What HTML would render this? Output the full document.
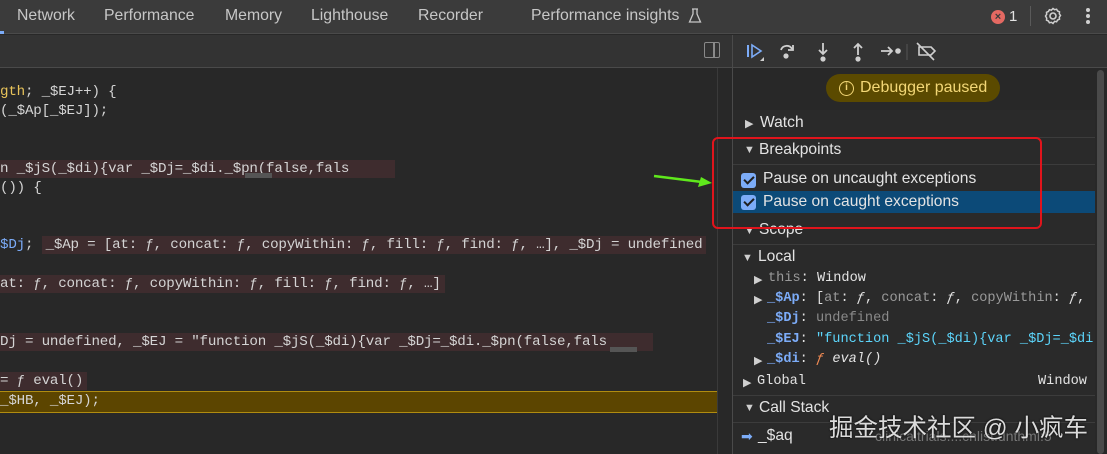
<!DOCTYPE html>
<html><head><meta charset="utf-8"><style>
*{margin:0;padding:0;box-sizing:border-box}
body{width:1107px;height:454px;overflow:hidden;background:#282828;font-family:"Liberation Sans",sans-serif;position:relative;color:#e3e3e3}
.a{position:absolute;white-space:nowrap}
.tab{font-size:15.8px;color:#c7c7c7;top:7px}
.code{font-family:"Liberation Mono",monospace;font-size:14.2px;color:#d4d4d4;letter-spacing:-0.2px}
.iv{background:#3e2c2e;padding:1px 4px}
.sec{font-size:15.6px;color:#e3e3e3}
.tri{font-size:11px;color:#cfcfcf}
.mono{font-family:"Liberation Mono",monospace;font-size:13.6px}
.chk{width:15px;height:15px;background:#7cacf8;border-radius:3px;position:absolute}
.chk:after{content:"";position:absolute;left:4.5px;top:1px;width:4px;height:8px;border:solid #1f1f1f;border-width:0 2px 2px 0;transform:rotate(45deg)}
.hl{border-top:1px solid #3c3c3c}
</style></head><body>
<div class="a" style="left:0;top:0;width:1107px;height:34px;background:#3b3b3b;border-bottom:1px solid #4a4a4a"></div>
<div class="a" style="left:0;top:31px;width:4px;height:3px;background:#7cacf8"></div>
<div class="a tab" style="left:17px">Network</div>
<div class="a tab" style="left:104px">Performance</div>
<div class="a tab" style="left:225px">Memory</div>
<div class="a tab" style="left:311px">Lighthouse</div>
<div class="a tab" style="left:418px">Recorder</div>
<div class="a tab" style="left:531px">Performance insights</div>
<svg class="a" style="left:688px;top:8px" width="14" height="16" viewBox="0 0 14 16"><path d="M4 1h6M5 1v5L1.5 14h11L9 6V1" fill="none" stroke="#c7c7c7" stroke-width="1.3"/></svg>
<div class="a" style="left:991px;top:10px;width:14px;height:14px;border-radius:50%;background:#e46962;color:#3b3b3b;font-size:11px;line-height:14px;text-align:center;font-weight:bold">×</div>
<div class="a" style="left:1009px;top:8px;font-size:15px;color:#e3e3e3">1</div>
<div class="a" style="left:1030px;top:6px;width:1px;height:20px;background:#5a5a5a"></div>
<svg class="a" style="left:1043px;top:6px" width="20" height="20" viewBox="0 0 20 20"><circle cx="10" cy="10" r="3" fill="none" stroke="#d0d0d0" stroke-width="1.6"/><path d="M10 2.5l1.6 1.2 2-.5 1 1.8 1.9.8-.2 2 1.2 1.7-1.2 1.7.2 2-1.9.8-1 1.8-2-.5L10 17.5l-1.6-1.2-2 .5-1-1.8-1.9-.8.2-2L2.5 10l1.2-1.7-.2-2 1.9-.8 1-1.8 2 .5z" fill="none" stroke="#d0d0d0" stroke-width="1.5"/></svg>
<div class="a" style="left:1086px;top:8px;width:4px;height:4px;border-radius:2px;background:#d0d0d0;box-shadow:0 6px 0 #d0d0d0,0 12px 0 #d0d0d0"></div>
<div class="a" style="left:0;top:35px;width:733px;height:33px;background:#333;border-bottom:1px solid #4a4a4a"></div>
<div class="a" style="left:733px;top:35px;width:374px;height:33px;background:#333;border-bottom:1px solid #4a4a4a"></div>
<div class="a" style="left:732px;top:35px;width:1px;height:419px;background:#4a4a4a"></div>
<div class="a" style="left:704px;top:42px;width:16px;height:16px;border:1.5px solid #8a8a8a;border-radius:2px"></div>
<div class="a" style="left:713px;top:42px;width:1.5px;height:16px;background:#8a8a8a"></div>
<svg class="a" style="left:745px;top:40px" width="200" height="24" viewBox="0 0 200 24">
<path d="M3 5v12" stroke="#7cacf8" stroke-width="2"/><path d="M7 5l9 6-9 6z" fill="none" stroke="#7cacf8" stroke-width="1.6"/><path d="M15 21l4-4v4z" fill="#cfcfcf"/>
<path d="M36 10a6 6 0 0 1 11-1" fill="none" stroke="#cfcfcf" stroke-width="1.8"/><path d="M48 5v5h-5" fill="none" stroke="#cfcfcf" stroke-width="1.8"/><circle cx="41" cy="16" r="2.6" fill="#cfcfcf"/>
<path d="M78 3v11M74 10l4 4 4-4" fill="none" stroke="#cfcfcf" stroke-width="1.8"/><circle cx="78" cy="19" r="2.6" fill="#cfcfcf"/>
<path d="M113 15V4M109 8l4-4 4 4" fill="none" stroke="#cfcfcf" stroke-width="1.8"/><circle cx="113" cy="19" r="2.6" fill="#cfcfcf"/>
<path d="M136 11h11M143 7l4 4-4 4" fill="none" stroke="#cfcfcf" stroke-width="1.8"/><circle cx="153" cy="11" r="2.8" fill="#cfcfcf"/>
<path d="M162 4v16" stroke="#555" stroke-width="1"/>
<path d="M186 7l4 4-4 4H174V7z" fill="none" stroke="#cfcfcf" stroke-width="1.6"/><path d="M172 3l17 17" stroke="#cfcfcf" stroke-width="1.6"/>
</svg>
<div class="a code" style="left:0;top:84px"><span style="color:#e8c35a">gth</span>; _$EJ++) {</div>
<div class="a code" style="left:0;top:103px">(_$Ap[_$EJ]);</div>
<div class="a code" style="left:0;top:161px"><span class="iv" style="padding-left:0;padding-right:46px">n _$jS(_$di){var _$Dj=_$di._$pn(false,fals</span></div>
<div class="a" style="left:245px;top:173px;width:27px;height:5px;background:#555"></div>
<div class="a code" style="left:0;top:180px">()) {</div>
<div class="a code" style="left:0;top:237px"><span style="color:#7cacf8">$Dj</span>;  <span class="iv">_$Ap = [at: ƒ, concat: ƒ, copyWithin: ƒ, fill: ƒ, find: ƒ, …], _$Dj = undefined</span></div>
<div class="a code" style="left:0;top:276px"><span class="iv" style="padding-left:0">at: ƒ, concat: ƒ, copyWithin: ƒ, fill: ƒ, find: ƒ, …]</span></div>
<div class="a code" style="left:0;top:334px"><span class="iv" style="padding-left:0;padding-right:46px">Dj = undefined, _$EJ = "function _$jS(_$di){var _$Dj=_$di._$pn(false,fals</span></div>
<div class="a" style="left:610px;top:347px;width:27px;height:5px;background:#555"></div>
<div class="a code" style="left:0;top:373px"><span class="iv" style="padding-left:0"> = ƒ eval()</span></div>
<div class="a" style="left:0;top:391px;width:717px;height:22px;background:#5c4500;border-top:1px solid #b08c10;border-bottom:1px solid #b08c10"></div>
<div class="a code" style="left:0;top:393px">_$HB, _$EJ);</div>
<div class="a" style="left:717px;top:68px;width:1px;height:386px;background:#3a3a3a"></div>
<div class="a" style="left:826px;top:74px;width:174px;height:28px;border-radius:14px;background:#5b4a00"></div>
<div class="a" style="left:839px;top:81px;width:15px;height:15px;border:1.5px solid #f3d776;border-radius:50%;color:#f3d776;font-size:10px;line-height:12px;text-align:center;font-weight:bold">i</div>
<div class="a" style="left:860px;top:79px;font-size:16px;color:#f3d776">Debugger paused</div>
<div class="a" style="left:733px;top:110px;width:362px;height:344px;background:#2a2a2a"></div>
<div class="a" style="left:1097px;top:70px;width:7px;height:384px;border-radius:4px;background:#4a4a4a"></div>
<div class="a tri" style="left:745px;top:117px">▶</div><div class="a sec" style="left:760px;top:114px">Watch</div>
<div class="a hl" style="left:733px;top:137px;width:362px"></div>
<div class="a tri" style="left:744px;top:144px">▼</div><div class="a sec" style="left:759px;top:141px">Breakpoints</div>
<div class="a hl" style="left:733px;top:164px;width:362px"></div>
<div class="a" style="left:733px;top:191px;width:362px;height:22px;background:#0c4a78"></div>
<div class="chk" style="left:741px;top:173px"></div><div class="a sec" style="left:763px;top:170px">Pause on uncaught exceptions</div>
<div class="chk" style="left:741px;top:195px"></div><div class="a sec" style="left:763px;top:193px">Pause on caught exceptions</div>
<div class="a tri" style="left:744px;top:225px">▼</div><div class="a sec" style="left:759px;top:221px">Scope</div>
<div class="a hl" style="left:733px;top:244px;width:362px"></div>
<div class="a tri" style="left:742px;top:252px">▼</div><div class="a sec" style="left:758px;top:248px">Local</div>
<div class="a tri" style="left:754px;top:273px">▶</div><div class="a mono" style="left:768px;top:271px"><span style="color:#9a9a9a">this</span>: Window</div>
<div class="a tri" style="left:754px;top:293px">▶</div><div class="a mono" style="left:767px;top:291px"><b style="color:#7cacf8">_$Ap</b>: [<span style="color:#9a9a9a">at</span>: <i>ƒ</i>, <span style="color:#9a9a9a">concat</span>: <i>ƒ</i>, <span style="color:#9a9a9a">copyWithin</span>: <i>ƒ</i>,</div>
<div class="a mono" style="left:767px;top:311px"><b style="color:#7cacf8">_$Dj</b>: <span style="color:#8a8a8a">undefined</span></div>
<div class="a mono" style="left:767px;top:332px;width:328px;overflow:hidden"><b style="color:#7cacf8">_$EJ</b>: <span style="color:#5cd5fb">"function _$jS(_$di){var _$Dj=_$di._$pn</span></div>
<div class="a tri" style="left:754px;top:354px">▶</div><div class="a mono" style="left:767px;top:352px"><b style="color:#7cacf8">_$di</b>: <i style="color:#f28b54">ƒ</i> <i>eval()</i></div>
<div class="a tri" style="left:743px;top:376px">▶</div><div class="a mono" style="left:757px;top:374px">Global</div>
<div class="a mono" style="left:1038px;top:374px">Window</div>
<div class="a hl" style="left:733px;top:395px;width:362px"></div>
<div class="a tri" style="left:744px;top:402px">▼</div><div class="a sec" style="left:759px;top:399px">Call Stack</div>
<div class="a hl" style="left:733px;top:422px;width:362px"></div>
<div class="a" style="left:741px;top:428px;color:#7cacf8;font-size:14px">➡</div>
<div class="a sec" style="left:758px;top:427px">_$aq</div>
<div class="a" style="left:875px;top:428px;font-size:14px;color:#777">clinicaltrials....chlist.dnthml:5</div>
<div class="a" style="left:829px;top:409px;font-size:24.5px;color:rgba(255,255,255,0.85);font-family:'Liberation Sans','Noto Sans CJK SC',sans-serif;text-shadow:0 0 2px #000">掘金技术社区 @ 小疯车</div>
<div class="a" style="left:712px;top:137px;width:330px;height:92px;border:2.5px solid #e0141c;border-radius:6px"></div>
<svg class="a" style="left:650px;top:170px" width="64" height="20"><path d="M4 6L52 12" stroke="#5fe81c" stroke-width="2.5"/><path d="M62 13l-14 4 3-10z" fill="#5fe81c"/></svg>
</body></html>
